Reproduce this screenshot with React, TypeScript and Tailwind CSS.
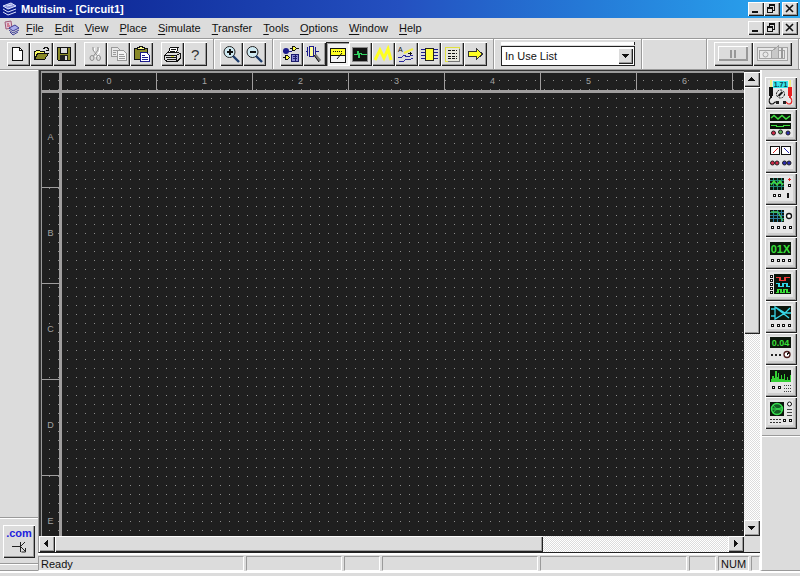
import React from "react";

type DrawingProps = { children: React.ReactNode; size: number; width?: number };

function Drawing({ children, size, width }: DrawingProps) {
  const w = width ?? size;
  return (
    <svg
      width={w}
      height={size}
      viewBox={`0 0 ${w} ${size}`}
      fill="none"
      stroke="#111"
      shapeRendering="crispEdges"
      aria-hidden="true"
      className="block"
    >
      {children}
    </svg>
  );
}

const raised =
  "bg-[#dcdcdc] shadow-[inset_1px_1px_0_#fff,inset_-1px_-1px_0_#222,inset_-2px_-2px_0_#9c9c9c]";

/* ---------- window controls ---------- */

function WindowControls({ target }: { target: string }) {
  return (
    <div className="ml-auto flex pr-[2px]">
      <button aria-label={`Minimize ${target}`} className={`h-[14px] w-4 ${raised}`}>
        <Drawing size={14} width={16}>
          <path d="M4 10h6" strokeWidth="2" />
        </Drawing>
      </button>
      <button aria-label={`Restore ${target}`} className={`h-[14px] w-4 ${raised}`}>
        <Drawing size={14} width={16}>
          <path d="M5 3h6M3 6h6" strokeWidth="2" />
          <path d="M5.5 3v3M10.5 3v5.500h-2M3.500 6v4.500h5v-4.500" />
        </Drawing>
      </button>
      <button aria-label={`Close ${target}`} className={`ml-[2px] h-[14px] w-4 ${raised}`}>
        <Drawing size={14} width={16}>
          <path d="M4 3l7 7M11 3l-7 7" strokeWidth="1.6" shapeRendering="auto" />
        </Drawing>
      </button>
    </div>
  );
}

/* ---------- toolbar ---------- */

type Tool = { label: string; icon: React.ReactNode; pressed?: boolean; disabled?: boolean };

const fileTools: Tool[] = [
  {
    label: "New",
    icon: (
      <>
        <path d="M5.500 4.500h7l3 3v9.500h-10z" fill="#fff" />
        <path d="M12.500 4.500v3h3" />
      </>
    ),
  },
  {
    label: "Open",
    icon: (
      <>
        <path d="M4.500 16.500v-8h1l1-1h3l1 1h4v2" fill="#ffff66" />
        <path d="M4.500 16.500l3-6h11l-4 6z" fill="#8a8a28" />
        <path d="M13 5.500h1l1-1h2l1 1v2M16 7.500h3" />
      </>
    ),
  },
  {
    label: "Save",
    icon: (
      <>
        <path d="M4.500 4.500h13v13h-12l-1-1z" fill="#8a8a28" />
        <path d="M7.500 4.500h7v6h-7z" fill="#dcdcdc" />
        <path d="M7 12h8v5h-8z" fill="#222" stroke="none" />
        <path d="M12 13h2v4h-2z" fill="#ddd" stroke="none" />
      </>
    ),
  },
];

const editTools: Tool[] = [
  {
    label: "Cut",
    disabled: true,
    icon: (
      <>
        <g stroke="#fff">
          <path d="M10.500 5v4l4 5M15.500 5v4l-4 5" />
        </g>
        <g stroke="#8c8c8c" shapeRendering="auto">
          <path d="M9 4v3l4.500 6M14 4v3l-4.500 6" />
          <ellipse cx="8" cy="15" rx="2" ry="2.5" />
          <ellipse cx="14.500" cy="15" rx="2" ry="2.500" />
        </g>
      </>
    ),
  },
  {
    label: "Copy",
    disabled: true,
    icon: (
      <g stroke="#999">
        <path d="M4.500 4.500h6l2 2v7h-8z" fill="#e8e8e8" />
        <path d="M10.500 7.500h6l3 3v7h-9z" fill="#f4f4f4" />
        <path d="M6 7.500h4M6 9.500h3M6 11.500h3M12 11.500h5M12 13.500h6M12 15.500h6" />
      </g>
    ),
  },
  {
    label: "Paste",
    icon: (
      <>
        <path d="M4.500 5.500h13v11h-13z" fill="#8a8a28" />
        <path d="M7.500 6.500v-2h2v-1h3v1h2v2z" fill="#ffff88" />
        <path d="M10.500 9.500h6l3 3v6h-9z" fill="#fff" stroke="#1c1c8c" />
        <path d="M12 12.500h3M12 14.500h6M12 16.500h6" stroke="#1c1c8c" />
      </>
    ),
  },
];

const printTools: Tool[] = [
  {
    label: "Print",
    icon: (
      <>
        <path d="M7.500 9.500l2-5.500h8l-2 5.500z" fill="#fff" />
        <path d="M10 6.500h5M9 8.500h5" />
        <path d="M3.500 12.500l3-3h11l1.500 1v5l-3 3h-10l-2.500-2z" fill="#dcdcdc" />
        <path d="M4 12.500h11.500v5M15.500 12.500l3-2M5 14.500h10M6 16.500h9" />
        <path d="M10 13.500h3" stroke="#d8d840" />
      </>
    ),
  },
  {
    label: "Help",
    icon: (
      <text
        x="7"
        y="17"
        fontSize="15"
        fill="#333"
        stroke="none"
        fontFamily="'Liberation Sans', sans-serif"
      >
        ?
      </text>
    ),
  },
];

function Magnifier({ plus }: { plus?: boolean }) {
  return (
    <>
      <circle cx="9.500" cy="9" r="5.500" fill="#cfeaf2" stroke="#222" shapeRendering="auto" />
      <path d="M13 13l6 6" stroke="#1c3c6c" strokeWidth="2.400" shapeRendering="auto" />
      <path d="M7 9h6" strokeWidth="2" />
      {plus && <path d="M10 6v6" strokeWidth="2" />}
    </>
  );
}

const zoomTools: Tool[] = [
  { label: "Zoom in", icon: <Magnifier plus /> },
  { label: "Zoom out", icon: <Magnifier /> },
];

const designTools: Tool[] = [
  {
    label: "Component design",
    icon: (
      <>
        <circle cx="6" cy="8" r="3" fill="#1c1c8c" stroke="none" shapeRendering="auto" />
        <path d="M3 8.500h9" stroke="#1c1c8c" />
        <path d="M12.500 3.500h2l2 2-2 2h-2z" fill="#ffff44" />
        <path d="M10 5.500h2M17 5.500h2" />
        <path d="M5.500 12.500h2l2 2-2 2h-2z" fill="#ffff44" />
        <path d="M3 14.500h2" />
        <path d="M11.500 11.500h7v7h-7z" fill="#8888d0" stroke="#1c1c6c" />
        <path d="M13 13.500h4M13 15.500h4M15 12v6" stroke="#1c1c6c" />
      </>
    ),
  },
  {
    label: "Component editor",
    icon: (
      <>
        <path d="M3 8.500h2M4.500 4v9" stroke="#1c1c8c" />
        <path d="M6.500 3.500h4v10h-4z" fill="#ffff99" stroke="#1c1c8c" />
        <path d="M12.500 4v9M13 8.500h3" stroke="#1c1c8c" />
        <path d="M12 12l5 6" stroke="#777" strokeWidth="3" shapeRendering="auto" />
        <path d="M11 12l5 7" stroke="#111" shapeRendering="auto" />
      </>
    ),
  },
  {
    label: "Instruments",
    pressed: true,
    icon: (
      <>
        <path d="M4.500 5.500h15v14h-15z" fill="#f4f4f4" />
        <path d="M5 6h14v6h-14z" fill="#ffff22" stroke="none" />
        <path d="M5 12.500h14" />
        <path d="M7 8.500h10" strokeDasharray="1 1" />
        <path d="M11 16l5-6" shapeRendering="auto" />
      </>
    ),
  },
  {
    label: "Simulate",
    icon: (
      <>
        <path d="M3.500 4.500h15v14h-15z" fill="#111" stroke="#888" />
        <path d="M5 11.500h3v-3h1v6h1v-4h2v1h6" stroke="#30d060" />
      </>
    ),
  },
  {
    label: "Analyses",
    icon: (
      <path d="M3 17l5-10 4 8 4-9 3 11" stroke="#ffff20" strokeWidth="3" shapeRendering="auto" />
    ),
  },
  {
    label: "Postprocessor",
    icon: (
      <>
        <text
          x="3"
          y="9"
          fontSize="7"
          fill="#111"
          stroke="none"
          fontFamily="'Liberation Sans', sans-serif"
        >
          A
        </text>
        <path d="M9 10l9-4" stroke="#f4f044" strokeWidth="2" shapeRendering="auto" />
        <path d="M13 10.500h4M15.500 9v3" />
        <path d="M3 14.500h3l3-2 3 1 6-1M4 18.500h4l3-2h3l4-1" stroke="#2a2a9c" />
      </>
    ),
  },
  {
    label: "VHDL simulation",
    icon: (
      <>
        <path
          d="M3 6.500h4M3 9.500h4M3 12.500h4M3 15.500h4M16 6.500h4M16 9.500h4M16 12.500h4M16 15.500h4"
          stroke="#1c1c8c"
        />
        <path d="M7.500 5.500h8v12h-8z" fill="#ffff33" stroke="#222" />
      </>
    ),
  },
  {
    label: "Reports",
    icon: (
      <>
        <path d="M4.500 4.500h14v14h-14z" fill="#e6e6dc" stroke="#e0e040" />
        <path d="M7 7.500h9M7 10.500h9M7 13.500h9M7 15.500h9" strokeDasharray="3 1" />
        <path d="M18.500 6v12.500h-12" stroke="#777" />
      </>
    ),
  },
  {
    label: "Transfer",
    icon: <path d="M4.500 8.500h8v-3l6 5.500-6 5.500v-3h-8z" fill="#ffff22" stroke="#333" />,
  },
];

function ToolGroup({ tools }: { tools: Tool[] }) {
  return (
    <div className="flex">
      {tools.map((t) => (
        <button
          key={t.label}
          aria-label={t.label}
          disabled={t.disabled}
          className={`h-6 w-[23px] ${
            t.pressed
              ? "bg-[#f2f2f2] shadow-[inset_1px_1px_0_#222,inset_2px_2px_0_#9c9c9c,inset_-1px_-1px_0_#fff]"
              : raised
          }`}
        >
          <Drawing size={23}>{t.icon}</Drawing>
        </button>
      ))}
    </div>
  );
}

function Divider() {
  return <div className="w-[2px] self-stretch border-l border-[#9a9a9a] bg-white" />;
}

function Toolbar() {
  return (
    <div
      role="toolbar"
      className="flex h-8 items-center overflow-hidden border-y border-[#9a9a9a] shadow-[inset_0_1px_0_#fff]"
    >
      <div className="flex shrink-0 gap-2 pr-[6px] pl-[7px]">
        <ToolGroup tools={fileTools} />
        <ToolGroup tools={editTools} />
        <ToolGroup tools={printTools} />
      </div>
      <Divider />
      <div className="shrink-0 pr-[6px] pl-[5px]">
        <ToolGroup tools={zoomTools} />
      </div>
      <Divider />
      <div className="shrink-0 px-[6px]">
        <ToolGroup tools={designTools} />
      </div>
      <Divider />
      <div className="shrink-0 px-[6px]">
        <div className="mb-px h-[3px] border-r border-[#222] bg-white" />
        <div className="relative">
          <select
            aria-label="In use list"
            className="block h-5 w-[134px] appearance-none border border-[#222] bg-white pl-[3px] text-[11px] leading-4 text-[#111] outline-none"
          >
            <option>In Use List</option>
          </select>
          <span
            className={`pointer-events-none absolute top-[2px] right-[2px] h-4 w-[15px] ${raised}`}
          >
            <Drawing size={16} width={15}>
              <path d="M4 6h7v1h-1v1h-1v1h-1v1h-1v-1h-1v-1h-1v-1h-1z" fill="#111" stroke="none" />
            </Drawing>
          </span>
        </div>
      </div>
      <Divider />
      <div className="min-w-0 flex-1" />
      <Divider />
      <div className="flex shrink-0 px-[6px]">
        <button aria-label="Pause" disabled className={`h-6 w-[39px] ${raised}`}>
          <Drawing size={24} width={39}>
            <path d="M4.500 18.500v-14h29" stroke="#fff" />
            <path d="M5 18h28v-13" stroke="#999" strokeWidth="2" />
            <path d="M17 8v8M21 8v8" stroke="#999" strokeWidth="2" />
          </Drawing>
        </button>
        <button aria-label="Run / stop simulation" disabled className={`h-6 w-[39px] ${raised}`}>
          <Drawing size={24} width={39}>
            <g stroke="#a4a4a4">
              <path d="M4.500 5.500h30v13h-30z" fill="#e8e8e8" />
              <path d="M6.500 8.500h12v8h-12z" />
              <circle cx="12.500" cy="12.500" r="2.500" shapeRendering="auto" />
              <path d="M18.500 9.500l7-6v13h-7z" fill="#c8c8c8" />
              <path d="M25.500 8.500h6v8h-6z" />
              <path d="M29 6v10" stroke="#999" strokeWidth="2" />
            </g>
          </Drawing>
        </button>
      </div>
      <Divider />
    </div>
  );
}

/* ---------- instruments ---------- */

function Jacks({ y, xs }: { y: number; xs: number[] }) {
  return (
    <>
      {xs.map((x) => (
        <rect key={x} x={x - 1} y={y - 1} width="2" height="2" fill="#fff" />
      ))}
    </>
  );
}

function Knob({ x, y, color }: { x: number; y: number; color: string }) {
  return (
    <circle cx={x} cy={y} r="2" fill={color} stroke="#222" strokeWidth="1" shapeRendering="auto" />
  );
}

function Screen({ x, y, w, h }: { x: number; y: number; w: number; h: number }) {
  return <rect x={x} y={y} width={w} height={h} fill="#0c160c" stroke="none" />;
}

type DigitsProps = { x: number; y: number; size: number; color: string; children: string };

function Digits({ x, y, size, color, children }: DigitsProps) {
  return (
    <text
      x={x}
      y={y}
      fontSize={size}
      fill={color}
      stroke="none"
      textAnchor="middle"
      fontWeight="bold"
      fontFamily="'Liberation Sans', sans-serif"
    >
      {children}
    </text>
  );
}

const instruments: { label: string; icon: React.ReactNode }[] = [
  {
    label: "Multimeter",
    icon: (
      <>
        <path d="M6 3v7M25 3v7" stroke="#eeee80" strokeWidth="2" />
        <path d="M4 10h4v9h-1v2h-2v-2h-1z" fill="#111" stroke="none" />
        <path d="M23 10h4v9h-1v2h-2v-2h-1z" fill="#e82020" stroke="none" />
        <path d="M6 20c-3 3-2 7 1 7s1-2 4-2" strokeWidth="1.2" shapeRendering="auto" />
        <path
          d="M25 20c3 3 2 7-1 7s-1-2-4-2"
          stroke="#e82020"
          strokeWidth="1.2"
          shapeRendering="auto"
        />
        <circle cx="15.500" cy="17" r="4" strokeDasharray="2 1" shapeRendering="auto" />
        <path d="M13.500 19l4-4" strokeWidth="2" shapeRendering="auto" />
        <path d="M11 24h3v3h-3zM18 24h3v3h-3z" fill="#222" stroke="none" />
        <rect x="8" y="4" width="15" height="7" fill="#38e4e8" stroke="none" />
        <Digits x={15.5} y={10} size={7} color="#063c4c">
          1.71
        </Digits>
      </>
    ),
  },
  {
    label: "Function generator",
    icon: (
      <>
        <Screen x={5} y={5} w={21} h={7} />
        <path
          d="M6 9l3-2.500 4 3.500 4-3.500 4 3.500 4-3"
          stroke="#40e040"
          strokeWidth="1.5"
          shapeRendering="auto"
        />
        <Screen x={5} y={14} w={21} h={6} />
        <path d="M6 16.500h5v1h7v-1h7" stroke="#40e040" />
        <Knob x={8.5} y={24} color="#d02848" />
        <Knob x={15.5} y={23} color="#60b060" />
        <Knob x={23} y={24} color="#2c2cb0" />
      </>
    ),
  },
  {
    label: "Wattmeter",
    icon: (
      <>
        <path d="M5.500 5.500h9v8h-9zM16.500 5.500h9v8h-9z" fill="#fff" />
        <path d="M8 12l5-5" stroke="#d02828" shapeRendering="auto" />
        <path d="M19 7l5 5" stroke="#2828b0" shapeRendering="auto" />
        <Knob x={7.5} y={22} color="#d02848" />
        <Knob x={12} y={22} color="#d02848" />
        <Knob x={19.5} y={22} color="#2c2cb0" />
        <Knob x={24} y={22} color="#2c2cb0" />
      </>
    ),
  },
  {
    label: "Oscilloscope",
    icon: (
      <>
        <Screen x={5} y={5} w={14} h={12} />
        <path
          d="M5 7.500h14M5 10.500h14M5 13.500h14M8.500 5v12M12.500 5v12M16.500 5v12"
          stroke="#208878"
        />
        <path
          d="M6 12l3-4 3 4 3-4 3 4"
          stroke="#40d840"
          strokeWidth="1.4"
          shapeRendering="auto"
        />
        <path d="M23 6.500h3M24.500 5v3" stroke="#e02828" />
        <Jacks y={12.5} xs={[24.5]} />
        <Jacks y={22.5} xs={[9.5, 14.5]} />
        <path d="M23 20v5" strokeWidth="2" />
      </>
    ),
  },
  {
    label: "Bode plotter",
    icon: (
      <>
        <Screen x={5} y={5} w={14} h={12} />
        <path
          d="M5 7.500h14M5 10.500h14M5 13.500h14M8.500 5v12M12.500 5v12M16.500 5v12"
          stroke="#2c7ca0"
        />
        <path d="M6 7h7l5 9" stroke="#40c860" strokeWidth="1.4" shapeRendering="auto" />
        <circle cx="24" cy="11" r="2.500" fill="#fff" strokeWidth="1.3" shapeRendering="auto" />
        <Jacks y={22.5} xs={[7.5, 13.5, 19.5, 25.5]} />
      </>
    ),
  },
  {
    label: "Word generator",
    icon: (
      <>
        <Screen x={5} y={5} w={21} h={13} />
        <Digits x={15.5} y={16} size={11} color="#38e038">
          01X
        </Digits>
        <Jacks y={23.5} xs={[7.5, 13.5, 18.5, 24.5]} />
      </>
    ),
  },
  {
    label: "Logic analyzer",
    icon: (
      <>
        <Screen x={9} y={5} w={17} h={20} />
        <path d="M11 8.500h4v3h5v-3h5" stroke="#f03838" strokeWidth="1.4" />
        <path d="M11 14.500h3v3h4v-3h4v3h3" stroke="#30d8e8" strokeWidth="1.4" />
        <path d="M11 23.500h2v-3h3v3h3v-3h3v3h3" stroke="#38e038" strokeWidth="1.4" />
        {[7.5, 11.5, 15.5, 19.5, 23.5].map((y) => (
          <Jacks key={y} y={y} xs={[6.5]} />
        ))}
      </>
    ),
  },
  {
    label: "Logic converter",
    icon: (
      <>
        <Screen x={5} y={5} w={21} h={14} />
        <path
          d="M6 8h4M6 15h4M10 6v12l10-6zM20 12h6M10 6l14 11M20 12l5-5"
          stroke="#38d8e8"
          strokeWidth="1.3"
          shapeRendering="auto"
        />
        <Jacks y={24.5} xs={[7.5, 13.5, 18.5, 24.5]} />
      </>
    ),
  },
  {
    label: "Distortion analyzer",
    icon: (
      <>
        <Screen x={5} y={4} w={21} h={11} />
        <Digits x={15.5} y={13} size={9} color="#38e038">
          0.04
        </Digits>
        <path d="M6 21h2v2h-2zM10 21h2v2h-2zM14 21h2v2h-2z" fill="#222" stroke="none" />
        <circle
          cx="22"
          cy="21.500"
          r="3"
          fill="#fff"
          stroke="#4c1c1c"
          strokeWidth="1.3"
          shapeRendering="auto"
        />
        <path d="M22 21.500l2-2" />
      </>
    ),
  },
  {
    label: "Spectrum analyzer",
    icon: (
      <>
        <Screen x={5} y={5} w={21} h={12} />
        <path
          d="M6 17h20v-7h-1v5h-2v-3h-1v3h-2v-6h-1v5h-2v-4h-1v4h-2v-6h-1v4h-1v-6h-2v7h-1v-2h-2z"
          fill="#34d034"
          stroke="none"
        />
        <Jacks y={22.5} xs={[8.5, 14.5]} />
        <path d="M19 20.500h8M19 23.500h8M19 26.500h8" stroke="#444" strokeDasharray="1 1" />
      </>
    ),
  },
  {
    label: "Network analyzer",
    icon: (
      <>
        <Screen x={5} y={5} w={14} h={14} />
        <g stroke="#38e050" shapeRendering="auto">
          <circle cx="12" cy="12" r="5.500" fill="#145c24" strokeWidth="1.4" />
          <path d="M6 12h12M8 8c3 5 6 4 9 2M8 16c3-5 6-4 9-2" />
        </g>
        <circle cx="24.500" cy="7" r="2" fill="#fff" shapeRendering="auto" />
        <path d="M22 12.500h5M22 15.500h5M22 18.500h5" stroke="#444" />
        <path d="M5 22.500h11M5 25.500h11" stroke="#333" strokeDasharray="2 1" />
        <Jacks y={23.5} xs={[19.5, 25.5]} />
      </>
    ),
  },
];

function InstrumentPanel() {
  return (
    <aside
      aria-label="Instruments"
      className="flex w-10 shrink-0 flex-col border-b border-l-2 border-b-[#9a9a9a] border-l-white pt-[7px]"
    >
      <div className="flex flex-col items-start border-b border-[#9a9a9a] pb-[6px] pl-[3px]">
        {instruments.map((i) => (
          <button
            key={i.label}
            aria-label={i.label}
            className="size-8 bg-[#e6e6e6] shadow-[inset_1px_1px_0_#fff,inset_-1px_-1px_0_#222,inset_-2px_-2px_0_#9c9c9c,inset_3px_3px_0_#d8d8d8,inset_-4px_-4px_0_#cfcfcf]"
          >
            <Drawing size={32}>{i.icon}</Drawing>
          </button>
        ))}
      </div>
      <div className="h-px bg-white" />
    </aside>
  );
}

/* ---------- drawing sheet ---------- */

const track = "bg-[conic-gradient(#fff_25%,#dcdcdc_0_50%,#fff_0_75%,#dcdcdc_0)] bg-size-[2px_2px]";

function Sheet() {
  return (
    <div className="flex min-h-0 min-w-0 flex-1 flex-col border-t-2 border-l border-[#9a9a9a] bg-[#1f1f1f] bg-[conic-gradient(at_1px_1px,transparent_75%,#8c8c8c_0)] bg-size-[9px_9px] bg-position-[7px_7px] text-[9px] text-[#a4a4a4]">
      <div className="flex h-5 shrink-0 overflow-hidden border-b-3 border-[#a09e9e]">
        <div className="w-5 shrink-0 border-r-3 border-[#a09e9e]" />
        {["0", "1", "2", "3", "4", "5", "6"].map((n) => (
          <div
            key={n}
            className="flex w-24 shrink-0 items-center justify-center border-r border-[#a09e9e] nth-2:w-[95px]"
          >
            <span className="mb-[2px] bg-[#1f1f1f] px-px leading-[10px]">{n}</span>
          </div>
        ))}
      </div>
      <div className="flex min-h-0 flex-1">
        <div className="w-5 shrink-0 overflow-hidden border-r-3 border-[#a09e9e]">
          {["A", "B", "C", "D", "E"].map((n) => (
            <div
              key={n}
              className="flex h-24 items-center justify-center border-b border-[#a09e9e] first:h-[95px]"
            >
              <span className="mb-[6px] bg-[#1f1f1f] px-px leading-[10px]">{n}</span>
            </div>
          ))}
        </div>
        <div className="flex-1" />
      </div>
    </div>
  );
}

function VerticalScroll() {
  return (
    <div className="flex w-4 shrink-0 flex-col border-t-2 border-[#444]">
      <button aria-label="Scroll up" className={`h-[15px] ${raised}`}>
        <Drawing size={15} width={16}>
          <path d="M4 9h7v-1h-1v-1h-1v-1h-1v-1h-1v1h-1v1h-1v1h-1z" fill="#111" stroke="none" />
        </Drawing>
      </button>
      <div className={`flex-[57] ${raised}`} />
      <div className={`flex-[43] ${track}`} />
      <button aria-label="Scroll down" className={`h-4 ${raised}`}>
        <Drawing size={16}>
          <path d="M4 6h7v1h-1v1h-1v1h-1v1h-1v-1h-1v-1h-1v-1h-1z" fill="#111" stroke="none" />
        </Drawing>
      </button>
    </div>
  );
}

function HorizontalScroll() {
  return (
    <div className="flex h-4 shrink-0">
      <button aria-label="Scroll left" className={`w-4 ${raised}`}>
        <Drawing size={16}>
          <path d="M9 4v7h-1v-1h-1v-1h-1v-1h-1v-1h1v-1h1v-1h1v-1z" fill="#111" stroke="none" />
        </Drawing>
      </button>
      <div className={`flex-[725] ${raised}`} />
      <div className={`flex-[275] ${track}`} />
      <button aria-label="Scroll right" className={`w-4 ${raised}`}>
        <Drawing size={16}>
          <path d="M6 4v7h1v-1h1v-1h1v-1h1v-1h-1v-1h-1v-1h-1v-1z" fill="#111" stroke="none" />
        </Drawing>
      </button>
      <div className="w-4 bg-[#dcdcdc]" />
    </div>
  );
}

function StatusPane({ className, children }: { className: string; children?: React.ReactNode }) {
  return (
    <div
      className={`h-[15px] overflow-hidden border-t border-r border-b border-l border-t-[#9a9a9a] border-r-white border-b-white border-l-[#9a9a9a] pl-[2px] leading-[14px] whitespace-nowrap ${className}`}
    >
      {children}
    </div>
  );
}

function StatusBar() {
  return (
    <footer className="flex shrink-0 gap-[2px] border-t-2 border-white pt-px">
      <StatusPane className="w-[206px]">Ready</StatusPane>
      <StatusPane className="w-24" />
      <StatusPane className="w-9" />
      <StatusPane className="w-[156px]" />
      <StatusPane className="flex-1" />
      <StatusPane className="w-[27px]" />
      <StatusPane className="w-[31px]">NUM</StatusPane>
      <StatusPane className="w-[9px]" />
    </footer>
  );
}

/* ---------- window ---------- */

const menus = [
  "File",
  "Edit",
  "View",
  "Place",
  "Simulate",
  "Transfer",
  "Tools",
  "Options",
  "Window",
  "Help",
];

export default function App() {
  return (
    <div className="flex h-screen flex-col overflow-hidden bg-[#dcdcdc] font-['Liberation_Sans',Arial,sans-serif] text-[11px] text-[#111]">
      <header className="flex h-[18px] shrink-0 items-center bg-linear-to-r from-[#0c1c8c] via-[#2450c0] to-[#2aa8f0] pl-[2px] text-white">
        <Drawing size={16}>
          <g shapeRendering="auto" stroke="#dfe4ff">
            <path d="M1 5l8-3 5 3-8 3z" fill="#8890d8" />
            <path d="M1 8l5 3 8-3M1 11l5 3 8-3M5 5l5-1" />
          </g>
        </Drawing>
        <h1 className="pl-[3px] font-bold">Multisim - [Circuit1]</h1>
        <WindowControls target="application" />
      </header>

      <nav className="flex h-5 shrink-0 items-center pl-1">
        <Drawing size={16}>
          <g shapeRendering="auto">
            <path d="M1 2l6-1 1 7-6 1z" fill="#e0c8d8" stroke="#a05878" />
            <path d="M3 4h2M3 6h3" stroke="#c03048" />
            <path d="M5 8l6-3 4 3-6 3z" fill="#a8acec" stroke="#3c3c94" />
            <path d="M5 10l4 3 6-3M6 12l3 3 5-3" stroke="#3c3c94" />
          </g>
        </Drawing>
        <ul className="flex gap-[11px] pl-[6px]">
          {menus.map((m) => (
            <li key={m}>
              <button className="block leading-4">
                <span className="underline underline-offset-2">{m[0]}</span>
                {m.slice(1)}
              </button>
            </li>
          ))}
        </ul>
        <WindowControls target="document" />
      </nav>

      <Toolbar />

      <main className="flex min-h-0 flex-1">
        <aside className="flex w-[38px] shrink-0 flex-col justify-end border-t border-b border-t-white border-b-[#9a9a9a]">
          <div className="h-[2px] border-t border-[#9a9a9a] bg-white" />
          <div className="flex h-11 items-center justify-center">
            <button className={`flex h-[33px] w-8 flex-col items-center ${raised}`}>
              <span className="pt-[2px] text-[11px] leading-3 font-bold text-[#2222dd]">.com</span>
              <Drawing size={16} width={18}>
                <path d="M2 7.500h8M10.500 3v10" stroke="#222" />
                <path
                  d="M11 7l4-4M11 8l4 4M15.500 9v4h-4"
                  stroke="#222"
                  shapeRendering="auto"
                />
              </Drawing>
            </button>
          </div>
          <div className="h-[7px] border-t border-[#9a9a9a] shadow-[inset_0_1px_0_#fff]" />
        </aside>

        <section className="flex min-w-0 flex-1 flex-col">
          <div className="flex min-h-0 flex-1 flex-col border-b border-l border-b-[#222] border-l-[#9a9a9a]">
            <div className="flex min-h-0 flex-1">
              <div className="flex min-w-0 flex-1 border-t border-l-2 border-[#333]">
                <Sheet />
              </div>
              <VerticalScroll />
            </div>
            <HorizontalScroll />
          </div>
          <StatusBar />
        </section>

        <InstrumentPanel />
      </main>

      <div className="h-[5px] shrink-0 border-t-2 border-white" />
    </div>
  );
}
